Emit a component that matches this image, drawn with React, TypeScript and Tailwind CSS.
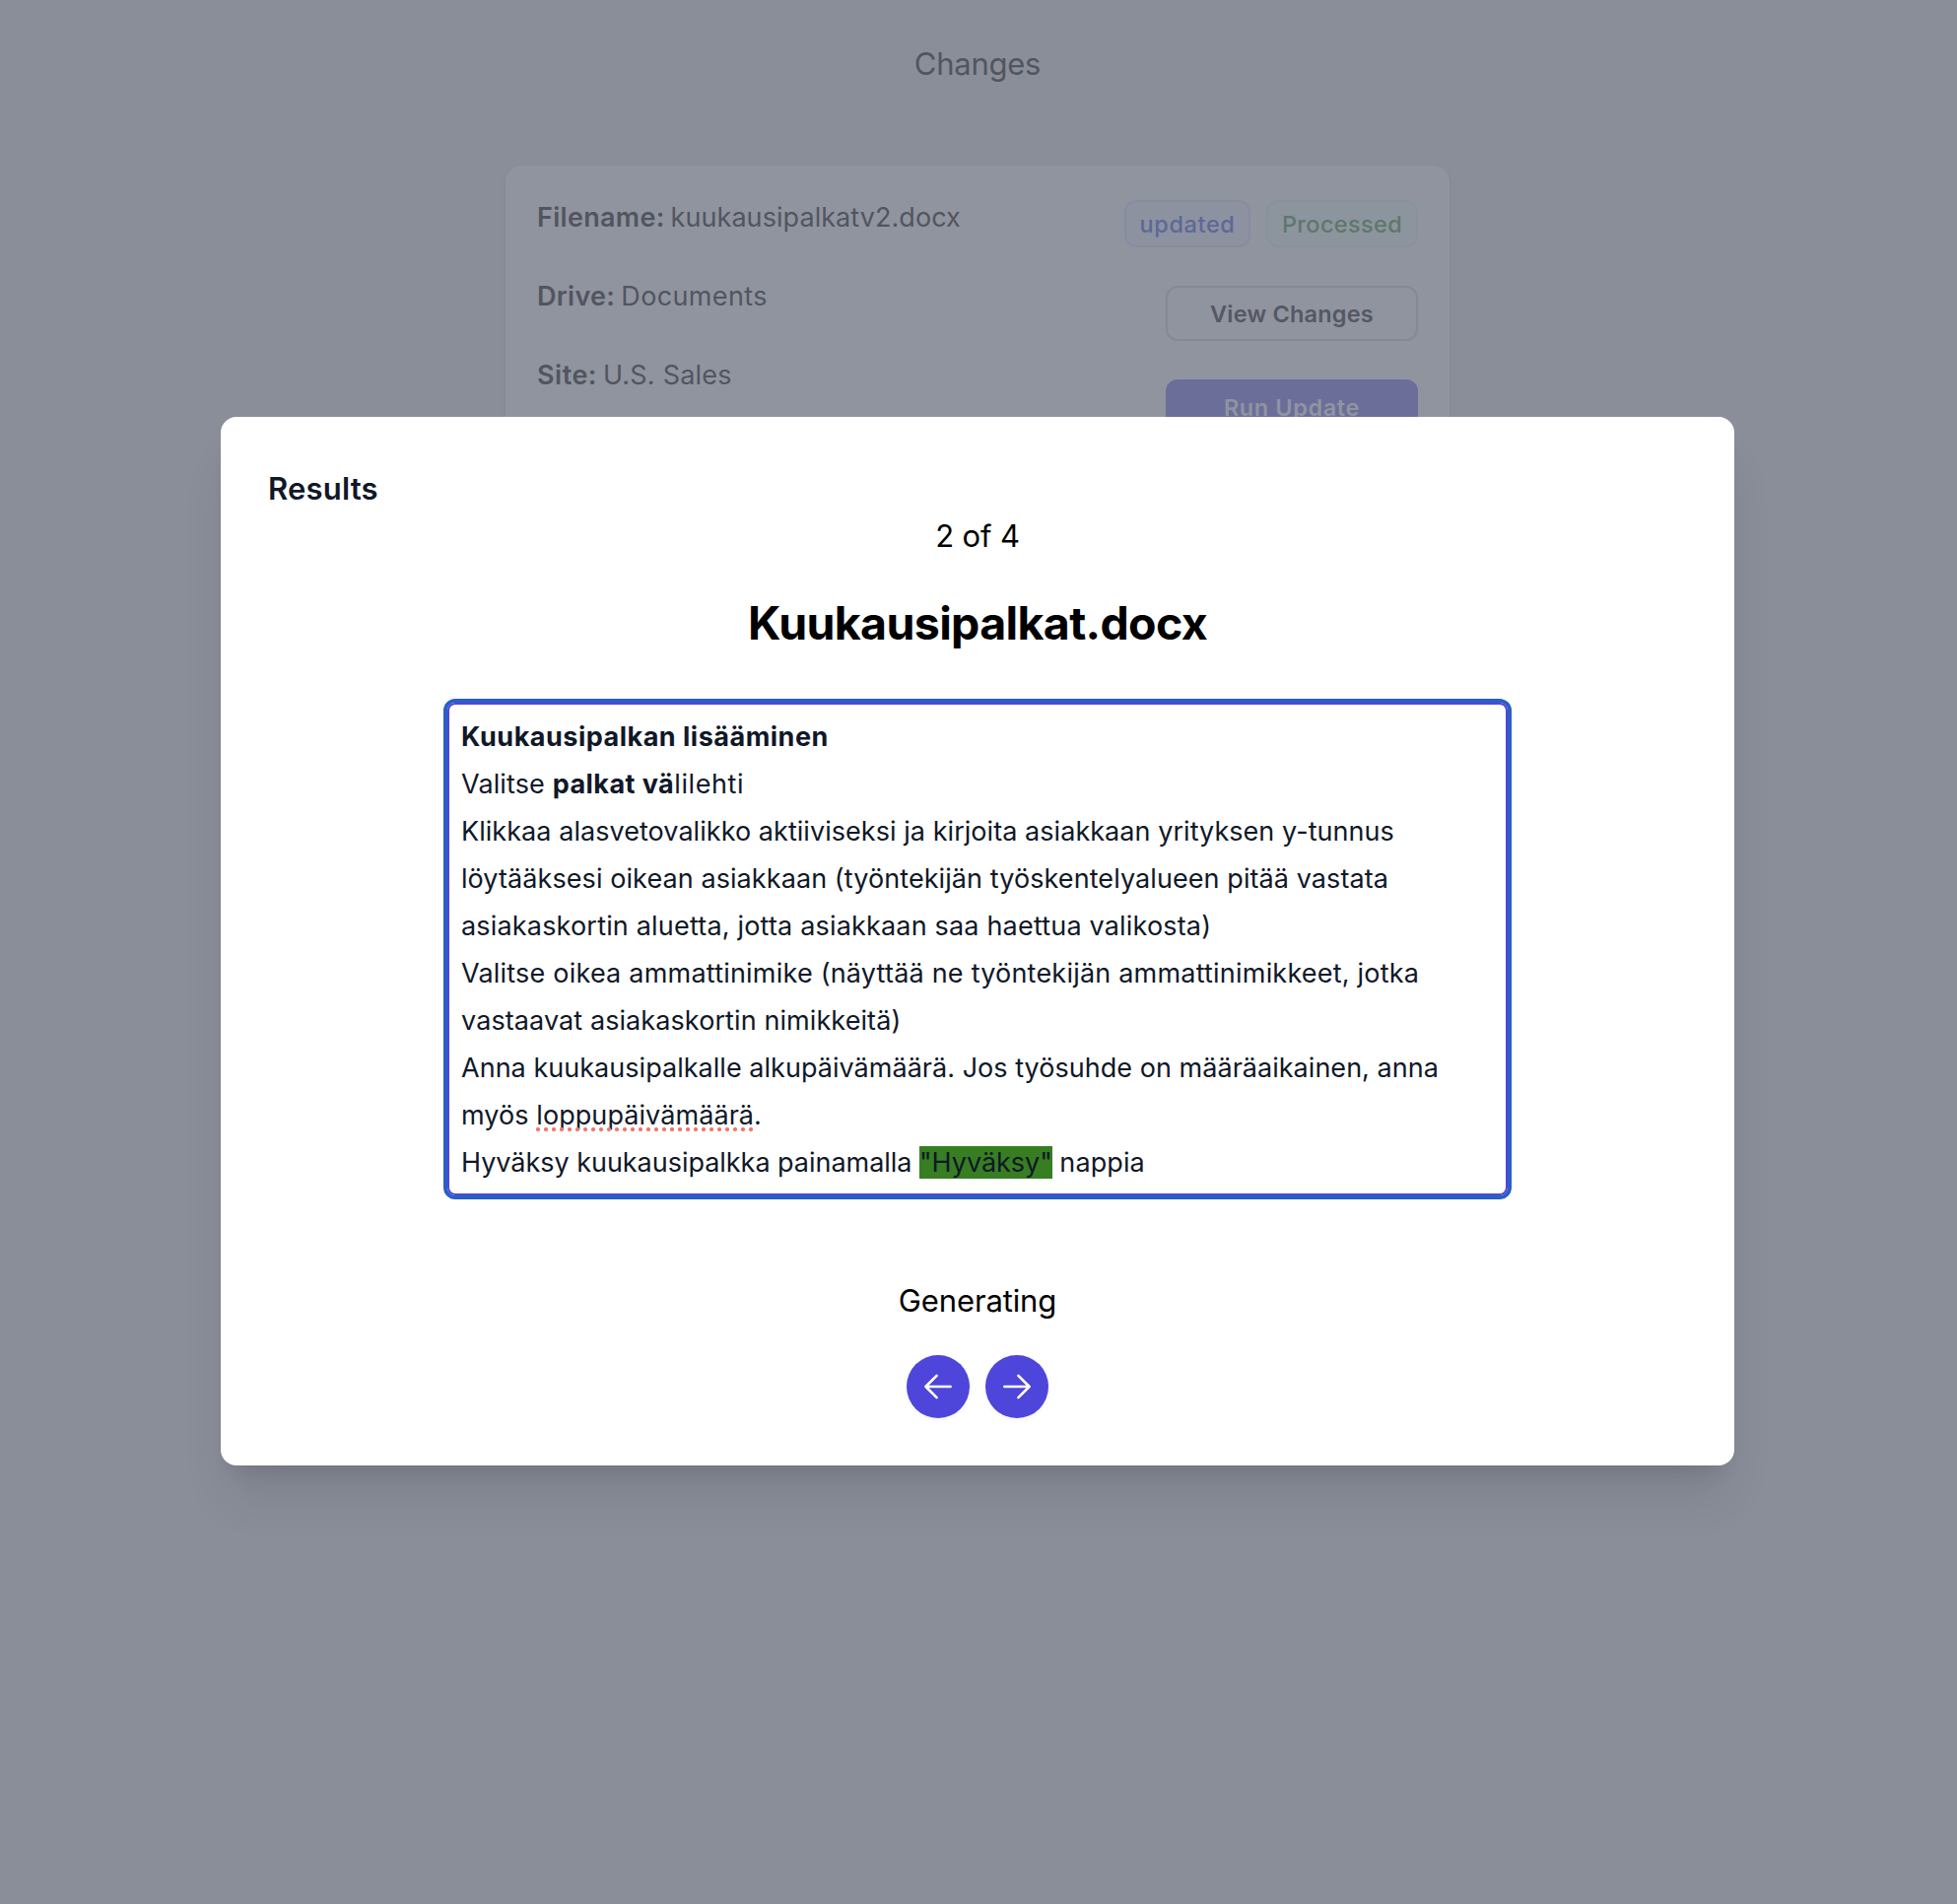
import React from "react";

const lines: React.ReactNode[] = [
  <p className="font-bold tracking-[0.5px]">Kuukausipalkan lisääminen</p>,
  <p className="tracking-[0.13px]">
    Valitse <b className="font-bold tracking-[0.45px]">palkat vä</b>
    <span className="tracking-[0.6px]">lilehti</span>
  </p>,
  <p className="tracking-[0.05px]">
    Klikkaa alasvetovalikko aktiiviseksi ja kirjoita asiakkaan yrityksen y-tunnus
  </p>,
  <p className="tracking-[0.08px]">
    löytääksesi oikean asiakkaan (työntekijän työskentelyalueen pitää vastata
  </p>,
  <p className="tracking-[0.18px]">
    asiakaskortin aluetta, jotta asiakkaan saa haettua valikosta)
  </p>,
  <p className="tracking-[0.21px]">
    Valitse oikea ammattinimike (näyttää ne työntekijän ammattinimikkeet, jotka
  </p>,
  <p className="tracking-[0.09px]">vastaavat asiakaskortin nimikkeitä)</p>,
  <p className="tracking-[0.03px]">
    Anna kuukausipalkalle alkupäivämäärä. Jos työsuhde on määräaikainen, anna
  </p>,
  <p className="tracking-[0.07px]">
    myös{" "}
    <span className="relative inline-block">
      loppupäivämäärä
      <span className="absolute top-[36px] left-0 h-1 w-[220px] bg-[radial-gradient(circle_at_2px_2px,#f4776d_1.8px,transparent_2.4px)] bg-[length:8px_4px]" />
    </span>
    .
  </p>,
  <p className="tracking-[-0.03px]">
    Hyväksy kuukausipalkka painamalla{" "}
    <mark className="inline-block h-[33px] bg-[#377e22] leading-[34px] text-gray-900">
      "Hyväksy"
    </mark>{" "}
    <span className="tracking-[0.1px]">nappia</span>
  </p>,
];

const arrowLeft = "M16.3 10H3.7M9.3 4.4L3.7 10l5.6 5.6";
const arrowRight = "M3.7 10h12.6M10.7 4.4l5.6 5.6-5.6 5.6";

function RoundButton({ path, label }: { path: string; label: string }) {
  return (
    <button
      aria-label={label}
      className="rounded-full bg-[#4e45db] p-3 text-white shadow-[0_2px_4px_rgba(0,0,0,0.05)]"
    >
      <svg
        viewBox="0 0 20 20"
        fill="none"
        stroke="currentColor"
        strokeWidth={1.3}
        strokeLinecap="round"
        strokeLinejoin="round"
        className="size-10"
      >
        <path d={path} />
      </svg>
    </button>
  );
}

function Field({ children }: { children: React.ReactNode }) {
  return (
    <div className="flex h-20 items-start gap-[6px] pt-px leading-10 whitespace-nowrap">
      {children}
    </div>
  );
}

function Page() {
  return (
    <div className="flex h-full flex-col items-center pr-0.5 text-[27px] text-[#52555f]">
      <h1 className="mt-[45px] h-[123px] text-[31px] leading-10 tracking-[-0.23px]">Changes</h1>
      <div className="flex h-[420px] w-[958px] shrink-0 justify-between rounded-2xl bg-[#90949f] p-8 shadow-[0_2px_4px_rgba(70,75,90,0.12)]">
        <div>
          <Field>
            <span className="font-semibold tracking-[0.3px]">Filename:</span>
            <span className="tracking-[0.06px]">kuukausipalkatv2.docx</span>
          </Field>
          <Field>
            <span className="font-semibold tracking-[0.3px]">Drive:</span>
            <span className="tracking-[0.37px]">Documents</span>
          </Field>
          <Field>
            <span className="font-semibold tracking-[0.5px]">Site:</span>
            <span className="tracking-[0.2px]">U.S. Sales</span>
          </Field>
        </div>
        <div className="flex flex-col items-end pt-[3px] text-[23.5px]">
          <div className="flex gap-4 font-medium">
            <span className="flex h-12 w-32 items-center justify-center rounded-xl border-2 border-[#888ca0] bg-[#8c929f] pt-0.5 tracking-[0.6px] text-[#5e6897]">
              updated
            </span>
            <span className="flex h-12 w-[154px] items-center justify-center rounded-xl border-2 border-[#88929b] bg-[#8c959d] pt-0.5 tracking-[0.36px] text-[#5f776c]">
              Processed
            </span>
          </div>
          <button className="mt-[39px] h-14 w-64 rounded-xl border-2 border-[#858995] pt-0.5 font-semibold tracking-[0.2px] text-[#555863]">
            View Changes
          </button>
          <button className="mt-[39px] h-14 w-64 rounded-xl bg-[#6b6e99] pt-0.5 font-semibold tracking-[0.6px] text-[#9094a0]">
            Run Update
          </button>
        </div>
      </div>
    </div>
  );
}

function Results() {
  return (
    <section className="flex h-[1064px] w-[1536px] flex-col items-center rounded-2xl bg-white px-12 text-[31px] text-black shadow-[0_40px_50px_-10px_rgba(0,0,0,0.1),0_16px_20px_-12px_rgba(0,0,0,0.1)]">
      <h2 className="mt-[49px] self-start leading-[48px] font-semibold tracking-[0.2px] text-gray-900">
        Results
      </h2>
      <p className="leading-[48px] tracking-[-0.15px]">2 of 4</p>
      <h3 className="mt-8 text-[46.5px] leading-[64px] font-bold tracking-[-0.65px]">
        Kuukausipalkat.docx
      </h3>
      <div className="mt-[45px] w-[1084px] rounded-xl border-4 border-[#2a5fc5]">
        <div className="rounded-lg border-2 border-[#5046dc] pt-[9px] pb-[7px] pl-3 text-[27px] leading-[48px] whitespace-nowrap text-gray-900">
          {lines.map((line, i) => (
            <div key={i} className="h-12">
              {line}
            </div>
          ))}
        </div>
      </div>
      <p className="mt-[79px] leading-[48px] tracking-[-0.12px]">Generating</p>
      <div className="mt-[31px] flex gap-4">
        <RoundButton path={arrowLeft} label="Previous" />
        <RoundButton path={arrowRight} label="Next" />
      </div>
    </section>
  );
}

export default function App() {
  return (
    <main className="relative h-[1932px] w-[1986px] overflow-hidden bg-[#8a8e99] font-['Inter',sans-serif]">
      <Page />
      <div className="absolute inset-0 flex items-start justify-center pt-[423px] pr-0.5">
        <Results />
      </div>
    </main>
  );
}
